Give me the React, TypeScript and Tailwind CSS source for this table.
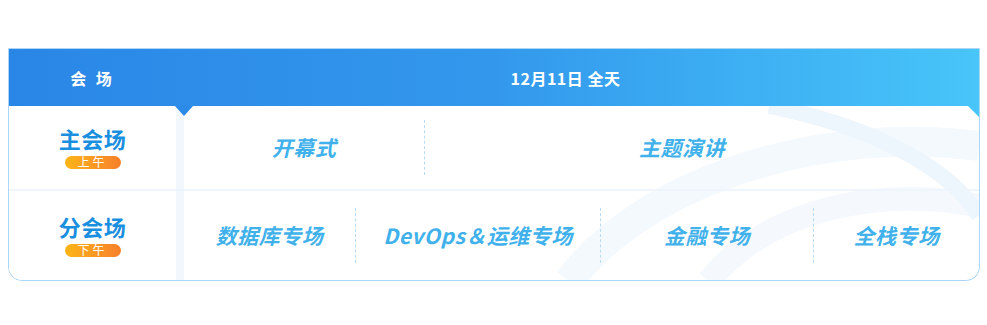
const cjk = "font-['Noto_Sans_CJK_SC','Noto_Sans',sans-serif]";

function Badge({ text }: { text: string }) {
  return (
    <span className="mt-[7px] flex h-[13px] w-[56px] items-center justify-center rounded-full bg-linear-to-r from-[#fdb416] to-[#f7802a] text-[12px] leading-none tracking-[3px] text-white">
      {text}
    </span>
  );
}

function Label({ name, time }: { name: string; time: string }) {
  return (
    <div className="flex w-[167px] flex-col items-center justify-center bg-white">
      <span className="text-[22px] font-bold leading-[22px] tracking-[0.5px] text-[#1a8fe0]">{name}</span>
      <Badge text={time} />
    </div>
  );
}

function Cell({ text, w, extra = "" }: { text: string; w: string; extra?: string }) {
  return (
    <div className={`flex items-center justify-center ${w} ${extra}`}>
      <span className="text-[21px] font-bold italic tracking-[0.5px] text-[#40b1eb]">{text}</span>
    </div>
  );
}

function Dash() {
  return <div className="h-[55px] w-0 self-center border-l border-dashed border-[#b7dbf5]" />;
}

export default function App() {
  return (
    <div className={`h-[325px] w-[987px] bg-white px-2 pt-12 ${cjk}`}>
      <div className="relative flex h-[233px] w-[972px] flex-col overflow-hidden rounded-b-[14px] border border-[#acd6f6] bg-linear-to-r from-[#2a86e6] via-[#3398ec] to-[#48c5f9]">
        <div className="flex h-[57px] items-center text-[16px] font-bold text-white">
          <div className="flex w-[167px] justify-center tracking-[3px]">会 场</div>
          <div className="flex flex-1 justify-center pr-[24px] tracking-[0.5px]">12月11日 全天</div>
        </div>

        <div className="relative flex flex-1 flex-col bg-white [clip-path:polygon(0_0,calc(100%-11px)_0,100%_11px,100%_100%,0_100%)]">
          <svg className="pointer-events-none absolute inset-0" width="970" height="175" viewBox="0 0 970 175">
            <path d="M560 175 C640 70 820 20 970 40" fill="none" stroke="#f4f9fe" strokeWidth="30" />
            <path d="M700 175 C760 100 880 80 970 100" fill="none" stroke="#f5f9fe" strokeWidth="24" />
            <path d="M760 0 C860 20 940 60 970 110" fill="none" stroke="#eef6fd" strokeWidth="16" />
          </svg>

          <div className="relative flex h-[83px]">
            <Label name="主会场" time="上午" />
            <div className="w-[8px] bg-[#f1f7fd]" />
            <Cell text="开幕式" w="w-[240px]" />
            <Dash />
            <Cell text="主题演讲" w="flex-1" extra="pr-[40px]" />
          </div>

          <div className="relative flex h-[2px]">
            <div className="w-[167px] bg-[#f1f6fc]" />
            <div className="w-[8px] bg-[#eaf3fc]" />
            <div className="flex-1 bg-[#eef5fc]" />
          </div>

          <div className="relative flex flex-1">
            <Label name="分会场" time="下午" />
            <div className="w-[8px] bg-[#f1f7fd]" />
            <Cell text="数据库专场" w="w-[171px]" />
            <Dash />
            <Cell text="DevOps＆运维专场" w="w-[244px]" />
            <Dash />
            <Cell text="金融专场" w="w-[212px]" />
            <Dash />
            <Cell text="全栈专场" w="flex-1" />
          </div>

          <div className="absolute left-[166px] top-0 h-0 w-0 border-x-[9px] border-t-[10px] border-x-transparent border-t-[#2b89e7]" />
        </div>
      </div>
    </div>
  );
}
